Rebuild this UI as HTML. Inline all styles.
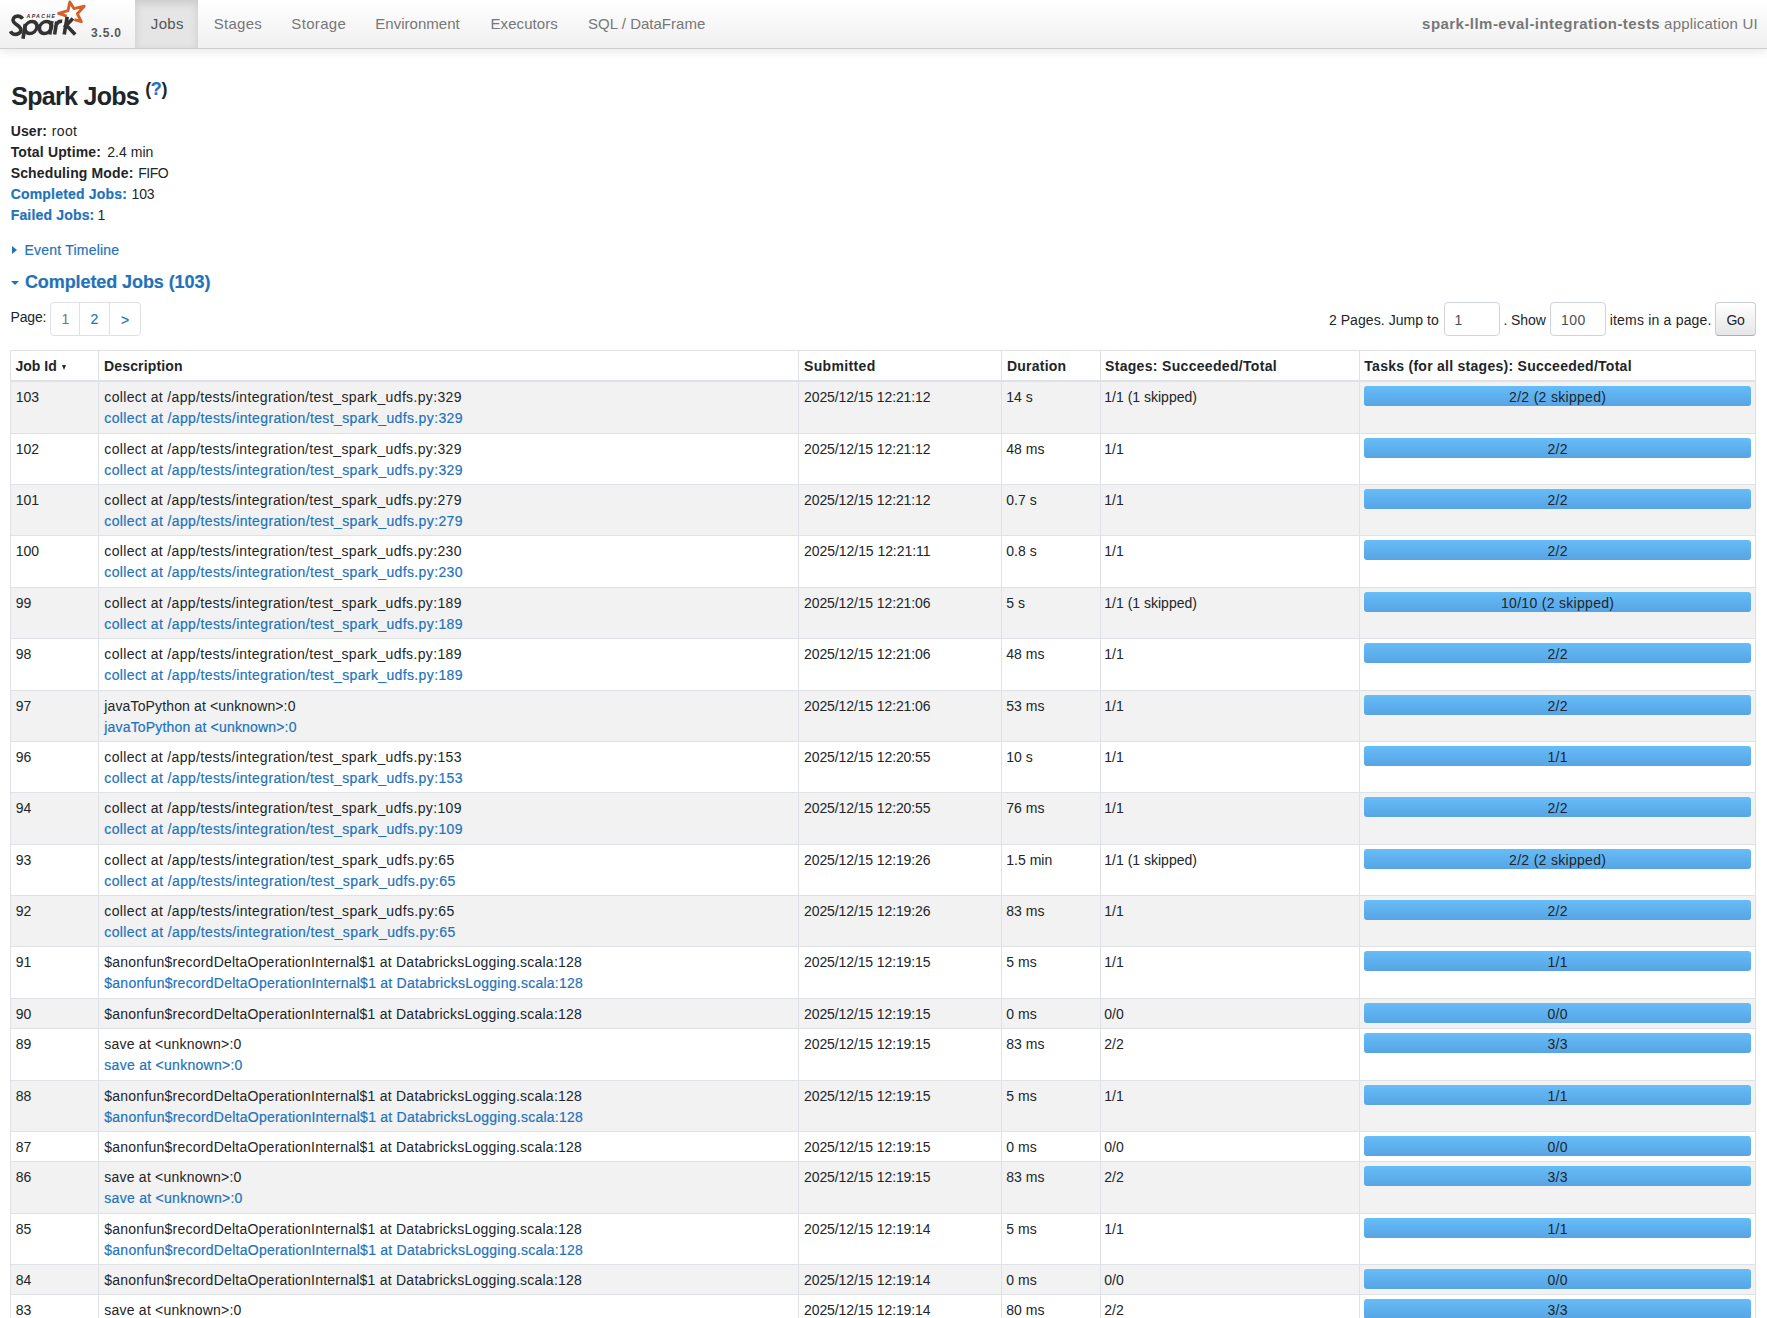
<!DOCTYPE html><html><head><meta charset="utf-8"><style>
html,body{margin:0;padding:0;background:#fff;width:1767px;height:1318px;overflow:hidden;position:relative}
body{font-family:"Liberation Sans",sans-serif}
.t{position:absolute;white-space:nowrap}
.nav{position:absolute;left:0;top:0;width:1767px;height:48px;background:linear-gradient(to bottom,#ffffff,#f0f0f0);border-bottom:1px solid #cecece;box-shadow:0 2px 10px rgba(0,0,0,.1)}
.act{position:absolute;left:135px;top:0;width:63px;height:48px;background:#e5e5e5;box-shadow:inset 0 3px 8px rgba(0,0,0,.125)}
.row{position:absolute;left:10px;width:1745px;border-left:1px solid #dee2e6;border-right:1px solid #dee2e6;border-bottom:1px solid #dee2e6;box-sizing:content-box}
.vl{position:absolute;width:1px;background:#dee2e6}
.bar{position:absolute;left:1364px;width:387px;height:20px;border-radius:3px;background:linear-gradient(to bottom,#66bdf7,#57a4e4)}
.pg{position:absolute;border:1px solid #dee2e6;background:#fff}
.inp{position:absolute;border:1px solid #ced4da;border-radius:4px;background:#fff;box-sizing:border-box}
</style></head><body>
<div class="nav"></div><div class="act"></div>
<svg style="position:absolute;left:0;top:0" width="130" height="48" viewBox="0 0 130 48">
<path fill="none" stroke="#d5602b" stroke-width="2.9" stroke-linejoin="round" stroke-linecap="butt" d="M66.6,16.2 L58.6,13.4 L68,10.6 L69.8,2 L73.9,8.6 L84.2,6.2 L77.4,13.8 L81.3,21.6 L74.4,19.6"/>
<g fill="none" stroke="#333" stroke-width="3.6" stroke-linecap="butt">
<path d="M22.6,18.8 C21.2,16.6 19.5,16 17.6,16.1 C13.8,16.3 12.2,19.2 13.6,21.8 C15,24.4 20.6,26 20.9,29.6 C21.2,33.2 17.2,34.6 14.4,34.3 C12.6,34.1 11.4,33 10.5,31.2"/>
<ellipse cx="31" cy="27.5" rx="6" ry="6" transform="skewX(-10) translate(4.8,0)"/>
<path d="M25.3,24 L23,38.8"/>
<ellipse cx="45.5" cy="27.5" rx="6" ry="6" transform="skewX(-10) translate(4.8,0)"/>
<path d="M51.9,21 L49.8,34.5"/>
<path d="M54.6,34.5 L56.7,21.5 M56.1,25 C57.3,22 59.8,21 62.2,21.3"/>
</g>

<g fill="none" stroke="#333" stroke-width="3.6" stroke-linecap="butt">
<path d="M67.2,16.8 L64.2,34.5 M64.2,27.6 L72.9,18.6 M66.6,25.6 L75.2,34.5"/>
</g>
<g fill="#333" font-family="Liberation Sans" font-weight="700" font-style="italic" font-size="5.2" letter-spacing="1.4"><text x="26.5" y="18.2">APACHE</text></g>
</svg>
<div class="t" id="t5a6a5e3c21" style="left:91px;top:24px;font-size:12px;line-height:18px;color:#585858;font-weight:700;letter-spacing:0.825px;">3.5.0</div>
<div class="t" id="tfd8004ba39" style="left:150.8px;top:13px;font-size:15px;line-height:22px;color:#555;letter-spacing:0.333px;">Jobs</div>
<div class="t" id="tf6de943f74" style="left:213.7px;top:13px;font-size:15px;line-height:22px;color:#777;letter-spacing:0.280px;">Stages</div>
<div class="t" id="tdbd1c17d63" style="left:291.3px;top:13px;font-size:15px;line-height:22px;color:#777;letter-spacing:0.333px;">Storage</div>
<div class="t" id="t078db31aac" style="left:375.3px;top:13px;font-size:15px;line-height:22px;color:#777;letter-spacing:0.020px;">Environment</div>
<div class="t" id="t190e977862" style="left:490.5px;top:13px;font-size:15px;line-height:22px;color:#777;letter-spacing:0.077px;">Executors</div>
<div class="t" id="tdd72fa5147" style="left:588.1px;top:13px;font-size:15px;line-height:22px;color:#777;letter-spacing:0.013px;">SQL / DataFrame</div>
<div class="t" id="tf8b7c0cc2b" style="left:1422.1px;top:13px;font-size:15px;line-height:22px;color:#777;font-weight:700;letter-spacing:0.459px;">spark-llm-eval-integration-tests</div>
<div class="t" id="t8193181b1c" style="left:1664.1px;top:13px;font-size:15px;line-height:22px;color:#777;letter-spacing:0.201px;">application UI</div>
<div class="t" id="t62a575fa32" style="left:11.2px;top:77px;font-size:25px;line-height:38px;color:#212529;font-weight:700;letter-spacing:-0.688px;">Spark Jobs</div>
<div class="t" id="t9cfd873ae0" style="left:145.2px;top:76px;font-size:18px;line-height:27px;color:#212529;font-weight:700;">(</div>
<div class="t" id="t18f5e1b5c4" style="left:150.8px;top:76px;font-size:18px;line-height:27px;color:#1f73bb;font-weight:700;-webkit-text-stroke:0.2px #1f73bb;">?</div>
<div class="t" id="t8e1df1a04c" style="left:161.5px;top:76px;font-size:18px;line-height:27px;color:#212529;font-weight:700;">)</div>
<div class="t" id="tacb48e94f9" style="left:10.7px;top:121px;font-size:14px;line-height:21px;color:#212529;font-weight:700;letter-spacing:0.125px;">User:</div><div class="t" id="tb560ddbbad" style="left:51.8px;top:121px;font-size:14px;line-height:21px;color:#212529;letter-spacing:0.333px;">root</div>
<div class="t" id="tde3e8092ce" style="left:10.7px;top:142px;font-size:14px;line-height:21px;color:#212529;font-weight:700;letter-spacing:0.151px;">Total Uptime:</div><div class="t" id="t4e84576a62" style="left:107.3px;top:142px;font-size:14px;line-height:21px;color:#212529;letter-spacing:0.014px;">2.4 min</div>
<div class="t" id="t5f37700813" style="left:10.7px;top:163px;font-size:14px;line-height:21px;color:#212529;font-weight:700;letter-spacing:0.137px;">Scheduling Mode:</div><div class="t" id="t1725ba6a26" style="left:138.2px;top:163px;font-size:14px;line-height:21px;color:#212529;letter-spacing:-1.000px;letter-spacing:-0.45px;">FIFO</div>
<div class="t" id="tb13db2fc51" style="left:10.7px;top:184px;font-size:14px;line-height:21px;color:#1f73bb;font-weight:700;-webkit-text-stroke:0.2px #1f73bb;letter-spacing:0.191px;">Completed Jobs:</div><div class="t" id="t88b6d6ae61" style="left:131.6px;top:184px;font-size:14px;line-height:21px;color:#212529;letter-spacing:-0.200px;">103</div>
<div class="t" id="t373b7ed87a" style="left:10.7px;top:205px;font-size:14px;line-height:21px;color:#1f73bb;font-weight:700;-webkit-text-stroke:0.2px #1f73bb;letter-spacing:0.172px;">Failed Jobs:</div><div class="t" id="t9db89bc16e" style="left:97.6px;top:205px;font-size:14px;line-height:21px;color:#212529;">1</div>
<div style="position:absolute;left:12px;top:245.5px;width:0;height:0;border-top:4.6px solid transparent;border-bottom:4.6px solid transparent;border-left:5px solid #1f73bb"></div>
<div class="t" id="t18c885a297" style="left:24.5px;top:240px;font-size:14px;line-height:21px;color:#1f73bb;-webkit-text-stroke:0.2px #1f73bb;letter-spacing:0.212px;">Event Timeline</div>
<div style="position:absolute;left:10.6px;top:280.8px;width:0;height:0;border-left:4.6px solid transparent;border-right:4.6px solid transparent;border-top:4.8px solid #1f73bb"></div>
<div class="t" id="t7a2237b650" style="left:24.9px;top:269px;font-size:18px;line-height:27px;color:#1f73bb;font-weight:700;-webkit-text-stroke:0.2px #1f73bb;letter-spacing:-0.082px;">Completed Jobs (103)</div>
<div class="t" id="t27ff93599c" style="left:10.6px;top:307px;font-size:14px;line-height:21px;color:#212529;letter-spacing:-0.200px;">Page:</div>
<div style="position:absolute;left:50px;top:302px;width:89px;height:32px;border:1px solid #dee2e6;border-radius:4px;background:#fff"></div>
<div class="vl" style="left:79px;top:302px;height:34px"></div><div class="vl" style="left:109px;top:302px;height:34px"></div>
<div class="t" id="t10a826cb85" style="left:61.5px;top:309px;font-size:14px;line-height:21px;color:#6c757d;">1</div>
<div class="t" id="t5f5555421e" style="left:90.5px;top:309px;font-size:14px;line-height:21px;color:#1f73bb;-webkit-text-stroke:0.2px #1f73bb;">2</div>
<div class="t" id="tf7d93cad2c" style="left:121px;top:310px;font-size:14px;line-height:21px;color:#1f73bb;-webkit-text-stroke:0.2px #1f73bb;">&gt;</div>
<div class="t" id="t232e25d809" style="left:1328.9px;top:310px;font-size:14px;line-height:21px;color:#212529;letter-spacing:0.067px;">2 Pages. Jump to</div>
<div class="inp" style="left:1444px;top:302px;width:56px;height:34px"></div>
<div class="t" id="tcce70ca4fe" style="left:1454.5px;top:310px;font-size:14px;line-height:21px;color:#495057;">1</div>
<div class="t" id="t486238b641" style="left:1503.4px;top:310px;font-size:14px;line-height:21px;color:#212529;letter-spacing:-0.060px;">. Show</div>
<div class="inp" style="left:1550px;top:302px;width:56px;height:34px"></div>
<div class="t" id="tbb3d0f333e" style="left:1561px;top:310px;font-size:14px;line-height:21px;color:#495057;letter-spacing:0.500px;">100</div>
<div class="t" id="t1c709797a5" style="left:1609.7px;top:310px;font-size:14px;line-height:21px;color:#212529;letter-spacing:0.196px;">items in a page.</div>
<div style="position:absolute;left:1715px;top:302px;width:41px;height:34px;box-sizing:border-box;border:1px solid #c9cfd6;border-bottom-color:#a9adb2;border-radius:4px;background:linear-gradient(to bottom,#ffffff,#e6e6e6)"></div>
<div class="t" id="t8bb71c042a" style="left:1726.5px;top:310px;font-size:14px;line-height:21px;color:#212529;letter-spacing:-0.4px;">Go</div>
<div style="position:absolute;left:10px;top:350px;width:1746px;height:1px;background:#dee2e6"></div>
<div style="position:absolute;left:10px;top:380px;width:1746px;height:2px;background:#dee2e6"></div>
<div class="t" id="td62880f7bf" style="left:15.5px;top:356px;font-size:14px;line-height:21px;color:#212529;font-weight:700;">Job Id</div>
<div class="t" id="t5d5263bd03" style="left:104px;top:356px;font-size:14px;line-height:21px;color:#212529;font-weight:700;letter-spacing:0.150px;">Description</div>
<div class="t" id="t6ed36d97dd" style="left:804px;top:356px;font-size:14px;line-height:21px;color:#212529;font-weight:700;letter-spacing:0.350px;">Submitted</div>
<div class="t" id="t56b8b93bbd" style="left:1007px;top:356px;font-size:14px;line-height:21px;color:#212529;font-weight:700;letter-spacing:0.214px;">Duration</div>
<div class="t" id="t9f754346dc" style="left:1105px;top:356px;font-size:14px;line-height:21px;color:#212529;font-weight:700;letter-spacing:0.320px;">Stages: Succeeded/Total</div>
<div class="t" id="tce5a482f80" style="left:1364.3px;top:356px;font-size:14px;line-height:21px;color:#212529;font-weight:700;letter-spacing:0.269px;">Tasks (for all stages): Succeeded/Total</div>
<div style="position:absolute;left:62px;top:364.6px;width:0;height:0;border-left:2.8px solid transparent;border-right:2.8px solid transparent;border-top:5px solid #212529"></div>
<div style="position:absolute;left:10px;top:382px;width:1746px;height:51px;background:#f2f2f2"></div>
<div style="position:absolute;left:10px;top:433px;width:1746px;height:1px;background:#dee2e6"></div>
<div class="t" id="t7436fdbd22" style="left:15.8px;top:387px;font-size:14px;line-height:21px;color:#212529;">103</div>
<div class="t" id="taf8f8dfed6" style="left:104.3px;top:387px;font-size:14px;line-height:21px;color:#212529;letter-spacing:0.354px;">collect at /app/tests/integration/test_spark_udfs.py:329</div>
<div class="t" id="t60bb6db279" style="left:104.3px;top:408px;font-size:14px;line-height:21px;color:#1f73bb;-webkit-text-stroke:0.2px #1f73bb;letter-spacing:0.372px;">collect at /app/tests/integration/test_spark_udfs.py:329</div>
<div class="t" id="t8cca39bdf2" style="left:804.1px;top:387px;font-size:14px;line-height:21px;color:#212529;letter-spacing:-0.114px;">2025/12/15 12:21:12</div>
<div class="t" id="t75221ed0a7" style="left:1006.3px;top:387px;font-size:14px;line-height:21px;color:#212529;">14 s</div>
<div class="t" id="t6d46c65faf" style="left:1104.3px;top:387px;font-size:14px;line-height:21px;color:#212529;">1/1 (1 skipped)</div>
<div class="bar" style="top:386px"></div>
<div class="t" id="ta11c407d30" style="left:1364px;top:387px;font-size:14px;line-height:21px;color:#212529;width:387px;text-align:center;letter-spacing:0.3px;text-indent:0.3px;">2/2 (2 skipped)</div>
<div style="position:absolute;left:10px;top:434px;width:1746px;height:50px;background:#ffffff"></div>
<div style="position:absolute;left:10px;top:484px;width:1746px;height:1px;background:#dee2e6"></div>
<div class="t" id="t82433eaf18" style="left:15.8px;top:439px;font-size:14px;line-height:21px;color:#212529;">102</div>
<div class="t" id="t2ff0c02efa" style="left:104.3px;top:439px;font-size:14px;line-height:21px;color:#212529;letter-spacing:0.354px;">collect at /app/tests/integration/test_spark_udfs.py:329</div>
<div class="t" id="tab244a0f2c" style="left:104.3px;top:460px;font-size:14px;line-height:21px;color:#1f73bb;-webkit-text-stroke:0.2px #1f73bb;letter-spacing:0.372px;">collect at /app/tests/integration/test_spark_udfs.py:329</div>
<div class="t" id="td72dc7c673" style="left:804.1px;top:439px;font-size:14px;line-height:21px;color:#212529;letter-spacing:-0.114px;">2025/12/15 12:21:12</div>
<div class="t" id="tbfafc1f957" style="left:1006.3px;top:439px;font-size:14px;line-height:21px;color:#212529;">48 ms</div>
<div class="t" id="tca086c2a58" style="left:1104.3px;top:439px;font-size:14px;line-height:21px;color:#212529;">1/1</div>
<div class="bar" style="top:438px"></div>
<div class="t" id="t0565558286" style="left:1364px;top:439px;font-size:14px;line-height:21px;color:#212529;width:387px;text-align:center;letter-spacing:0.3px;text-indent:0.3px;">2/2</div>
<div style="position:absolute;left:10px;top:485px;width:1746px;height:50px;background:#f2f2f2"></div>
<div style="position:absolute;left:10px;top:535px;width:1746px;height:1px;background:#dee2e6"></div>
<div class="t" id="tb1683d8fe5" style="left:15.8px;top:490px;font-size:14px;line-height:21px;color:#212529;">101</div>
<div class="t" id="te5a6e24013" style="left:104.3px;top:490px;font-size:14px;line-height:21px;color:#212529;letter-spacing:0.354px;">collect at /app/tests/integration/test_spark_udfs.py:279</div>
<div class="t" id="tabeae9259c" style="left:104.3px;top:511px;font-size:14px;line-height:21px;color:#1f73bb;-webkit-text-stroke:0.2px #1f73bb;letter-spacing:0.372px;">collect at /app/tests/integration/test_spark_udfs.py:279</div>
<div class="t" id="tf7f2473b9a" style="left:804.1px;top:490px;font-size:14px;line-height:21px;color:#212529;letter-spacing:-0.114px;">2025/12/15 12:21:12</div>
<div class="t" id="tbadb781308" style="left:1006.3px;top:490px;font-size:14px;line-height:21px;color:#212529;">0.7 s</div>
<div class="t" id="tc0b9d9264a" style="left:1104.3px;top:490px;font-size:14px;line-height:21px;color:#212529;">1/1</div>
<div class="bar" style="top:489px"></div>
<div class="t" id="t87e4671468" style="left:1364px;top:490px;font-size:14px;line-height:21px;color:#212529;width:387px;text-align:center;letter-spacing:0.3px;text-indent:0.3px;">2/2</div>
<div style="position:absolute;left:10px;top:536px;width:1746px;height:51px;background:#ffffff"></div>
<div style="position:absolute;left:10px;top:587px;width:1746px;height:1px;background:#dee2e6"></div>
<div class="t" id="t5a372eea39" style="left:15.8px;top:541px;font-size:14px;line-height:21px;color:#212529;">100</div>
<div class="t" id="t2957afc64e" style="left:104.3px;top:541px;font-size:14px;line-height:21px;color:#212529;letter-spacing:0.354px;">collect at /app/tests/integration/test_spark_udfs.py:230</div>
<div class="t" id="td7cb7f14f0" style="left:104.3px;top:562px;font-size:14px;line-height:21px;color:#1f73bb;-webkit-text-stroke:0.2px #1f73bb;letter-spacing:0.372px;">collect at /app/tests/integration/test_spark_udfs.py:230</div>
<div class="t" id="t29ed4abfa1" style="left:804.1px;top:541px;font-size:14px;line-height:21px;color:#212529;letter-spacing:-0.058px;">2025/12/15 12:21:11</div>
<div class="t" id="t8cd5def2f8" style="left:1006.3px;top:541px;font-size:14px;line-height:21px;color:#212529;">0.8 s</div>
<div class="t" id="t7472454267" style="left:1104.3px;top:541px;font-size:14px;line-height:21px;color:#212529;">1/1</div>
<div class="bar" style="top:540px"></div>
<div class="t" id="t37c2acee40" style="left:1364px;top:541px;font-size:14px;line-height:21px;color:#212529;width:387px;text-align:center;letter-spacing:0.3px;text-indent:0.3px;">2/2</div>
<div style="position:absolute;left:10px;top:588px;width:1746px;height:50px;background:#f2f2f2"></div>
<div style="position:absolute;left:10px;top:638px;width:1746px;height:1px;background:#dee2e6"></div>
<div class="t" id="tdf21d88c3e" style="left:15.8px;top:593px;font-size:14px;line-height:21px;color:#212529;">99</div>
<div class="t" id="tefd8e33620" style="left:104.3px;top:593px;font-size:14px;line-height:21px;color:#212529;letter-spacing:0.354px;">collect at /app/tests/integration/test_spark_udfs.py:189</div>
<div class="t" id="t9ec468438d" style="left:104.3px;top:614px;font-size:14px;line-height:21px;color:#1f73bb;-webkit-text-stroke:0.2px #1f73bb;letter-spacing:0.372px;">collect at /app/tests/integration/test_spark_udfs.py:189</div>
<div class="t" id="tc55a027c8a" style="left:804.1px;top:593px;font-size:14px;line-height:21px;color:#212529;letter-spacing:-0.114px;">2025/12/15 12:21:06</div>
<div class="t" id="t2f1f75395b" style="left:1006.3px;top:593px;font-size:14px;line-height:21px;color:#212529;">5 s</div>
<div class="t" id="t0a824380c3" style="left:1104.3px;top:593px;font-size:14px;line-height:21px;color:#212529;">1/1 (1 skipped)</div>
<div class="bar" style="top:592px"></div>
<div class="t" id="teb66f91c84" style="left:1364px;top:593px;font-size:14px;line-height:21px;color:#212529;width:387px;text-align:center;letter-spacing:0.3px;text-indent:0.3px;">10/10 (2 skipped)</div>
<div style="position:absolute;left:10px;top:639px;width:1746px;height:51px;background:#ffffff"></div>
<div style="position:absolute;left:10px;top:690px;width:1746px;height:1px;background:#dee2e6"></div>
<div class="t" id="t3019eb8095" style="left:15.8px;top:644px;font-size:14px;line-height:21px;color:#212529;">98</div>
<div class="t" id="t48c21447bd" style="left:104.3px;top:644px;font-size:14px;line-height:21px;color:#212529;letter-spacing:0.354px;">collect at /app/tests/integration/test_spark_udfs.py:189</div>
<div class="t" id="t20ddb12ada" style="left:104.3px;top:665px;font-size:14px;line-height:21px;color:#1f73bb;-webkit-text-stroke:0.2px #1f73bb;letter-spacing:0.372px;">collect at /app/tests/integration/test_spark_udfs.py:189</div>
<div class="t" id="te91d3c0370" style="left:804.1px;top:644px;font-size:14px;line-height:21px;color:#212529;letter-spacing:-0.114px;">2025/12/15 12:21:06</div>
<div class="t" id="t8c1d95ec3a" style="left:1006.3px;top:644px;font-size:14px;line-height:21px;color:#212529;">48 ms</div>
<div class="t" id="t4ee1949a8c" style="left:1104.3px;top:644px;font-size:14px;line-height:21px;color:#212529;">1/1</div>
<div class="bar" style="top:643px"></div>
<div class="t" id="td210687749" style="left:1364px;top:644px;font-size:14px;line-height:21px;color:#212529;width:387px;text-align:center;letter-spacing:0.3px;text-indent:0.3px;">2/2</div>
<div style="position:absolute;left:10px;top:691px;width:1746px;height:50px;background:#f2f2f2"></div>
<div style="position:absolute;left:10px;top:741px;width:1746px;height:1px;background:#dee2e6"></div>
<div class="t" id="tc7976aa92e" style="left:15.8px;top:696px;font-size:14px;line-height:21px;color:#212529;">97</div>
<div class="t" id="t3bf3961030" style="left:104.3px;top:696px;font-size:14px;line-height:21px;color:#212529;letter-spacing:0.137px;">javaToPython at &lt;unknown&gt;:0</div>
<div class="t" id="t575fc0992e" style="left:104.3px;top:717px;font-size:14px;line-height:21px;color:#1f73bb;-webkit-text-stroke:0.2px #1f73bb;letter-spacing:0.175px;">javaToPython at &lt;unknown&gt;:0</div>
<div class="t" id="te9c7b3fa1f" style="left:804.1px;top:696px;font-size:14px;line-height:21px;color:#212529;letter-spacing:-0.114px;">2025/12/15 12:21:06</div>
<div class="t" id="td5e16c6f1c" style="left:1006.3px;top:696px;font-size:14px;line-height:21px;color:#212529;">53 ms</div>
<div class="t" id="t6fc532798c" style="left:1104.3px;top:696px;font-size:14px;line-height:21px;color:#212529;">1/1</div>
<div class="bar" style="top:695px"></div>
<div class="t" id="t0d1cf9e5cf" style="left:1364px;top:696px;font-size:14px;line-height:21px;color:#212529;width:387px;text-align:center;letter-spacing:0.3px;text-indent:0.3px;">2/2</div>
<div style="position:absolute;left:10px;top:742px;width:1746px;height:50px;background:#ffffff"></div>
<div style="position:absolute;left:10px;top:792px;width:1746px;height:1px;background:#dee2e6"></div>
<div class="t" id="t5e1b613e7e" style="left:15.8px;top:747px;font-size:14px;line-height:21px;color:#212529;">96</div>
<div class="t" id="tc0801e165f" style="left:104.3px;top:747px;font-size:14px;line-height:21px;color:#212529;letter-spacing:0.354px;">collect at /app/tests/integration/test_spark_udfs.py:153</div>
<div class="t" id="tb08733fb9f" style="left:104.3px;top:768px;font-size:14px;line-height:21px;color:#1f73bb;-webkit-text-stroke:0.2px #1f73bb;letter-spacing:0.372px;">collect at /app/tests/integration/test_spark_udfs.py:153</div>
<div class="t" id="tc7055b93b0" style="left:804.1px;top:747px;font-size:14px;line-height:21px;color:#212529;letter-spacing:-0.114px;">2025/12/15 12:20:55</div>
<div class="t" id="tb0ac088fd5" style="left:1006.3px;top:747px;font-size:14px;line-height:21px;color:#212529;">10 s</div>
<div class="t" id="tb8c03fc2f5" style="left:1104.3px;top:747px;font-size:14px;line-height:21px;color:#212529;">1/1</div>
<div class="bar" style="top:746px"></div>
<div class="t" id="t773bc3b8f7" style="left:1364px;top:747px;font-size:14px;line-height:21px;color:#212529;width:387px;text-align:center;letter-spacing:0.3px;text-indent:0.3px;">1/1</div>
<div style="position:absolute;left:10px;top:793px;width:1746px;height:51px;background:#f2f2f2"></div>
<div style="position:absolute;left:10px;top:844px;width:1746px;height:1px;background:#dee2e6"></div>
<div class="t" id="tc6ca89c3d0" style="left:15.8px;top:798px;font-size:14px;line-height:21px;color:#212529;">94</div>
<div class="t" id="t922f0f4982" style="left:104.3px;top:798px;font-size:14px;line-height:21px;color:#212529;letter-spacing:0.354px;">collect at /app/tests/integration/test_spark_udfs.py:109</div>
<div class="t" id="t8ea2f7690e" style="left:104.3px;top:819px;font-size:14px;line-height:21px;color:#1f73bb;-webkit-text-stroke:0.2px #1f73bb;letter-spacing:0.372px;">collect at /app/tests/integration/test_spark_udfs.py:109</div>
<div class="t" id="t0ea3cadc6a" style="left:804.1px;top:798px;font-size:14px;line-height:21px;color:#212529;letter-spacing:-0.114px;">2025/12/15 12:20:55</div>
<div class="t" id="t783882354c" style="left:1006.3px;top:798px;font-size:14px;line-height:21px;color:#212529;">76 ms</div>
<div class="t" id="td283efd604" style="left:1104.3px;top:798px;font-size:14px;line-height:21px;color:#212529;">1/1</div>
<div class="bar" style="top:797px"></div>
<div class="t" id="tbe665a4d52" style="left:1364px;top:798px;font-size:14px;line-height:21px;color:#212529;width:387px;text-align:center;letter-spacing:0.3px;text-indent:0.3px;">2/2</div>
<div style="position:absolute;left:10px;top:845px;width:1746px;height:50px;background:#ffffff"></div>
<div style="position:absolute;left:10px;top:895px;width:1746px;height:1px;background:#dee2e6"></div>
<div class="t" id="t75a4879328" style="left:15.8px;top:850px;font-size:14px;line-height:21px;color:#212529;">93</div>
<div class="t" id="t1a643f5471" style="left:104.3px;top:850px;font-size:14px;line-height:21px;color:#212529;letter-spacing:0.370px;">collect at /app/tests/integration/test_spark_udfs.py:65</div>
<div class="t" id="tc6eeccc914" style="left:104.3px;top:871px;font-size:14px;line-height:21px;color:#1f73bb;-webkit-text-stroke:0.2px #1f73bb;letter-spacing:0.389px;">collect at /app/tests/integration/test_spark_udfs.py:65</div>
<div class="t" id="td5f04d777e" style="left:804.1px;top:850px;font-size:14px;line-height:21px;color:#212529;letter-spacing:-0.114px;">2025/12/15 12:19:26</div>
<div class="t" id="t8248acdf5d" style="left:1006.3px;top:850px;font-size:14px;line-height:21px;color:#212529;">1.5 min</div>
<div class="t" id="t6f993ef272" style="left:1104.3px;top:850px;font-size:14px;line-height:21px;color:#212529;">1/1 (1 skipped)</div>
<div class="bar" style="top:849px"></div>
<div class="t" id="tb436c0244e" style="left:1364px;top:850px;font-size:14px;line-height:21px;color:#212529;width:387px;text-align:center;letter-spacing:0.3px;text-indent:0.3px;">2/2 (2 skipped)</div>
<div style="position:absolute;left:10px;top:896px;width:1746px;height:50px;background:#f2f2f2"></div>
<div style="position:absolute;left:10px;top:946px;width:1746px;height:1px;background:#dee2e6"></div>
<div class="t" id="tc1cde184a1" style="left:15.8px;top:901px;font-size:14px;line-height:21px;color:#212529;">92</div>
<div class="t" id="t5e6d6dd636" style="left:104.3px;top:901px;font-size:14px;line-height:21px;color:#212529;letter-spacing:0.370px;">collect at /app/tests/integration/test_spark_udfs.py:65</div>
<div class="t" id="t989be82bc1" style="left:104.3px;top:922px;font-size:14px;line-height:21px;color:#1f73bb;-webkit-text-stroke:0.2px #1f73bb;letter-spacing:0.389px;">collect at /app/tests/integration/test_spark_udfs.py:65</div>
<div class="t" id="t9996436ef2" style="left:804.1px;top:901px;font-size:14px;line-height:21px;color:#212529;letter-spacing:-0.114px;">2025/12/15 12:19:26</div>
<div class="t" id="t4cf1e7f597" style="left:1006.3px;top:901px;font-size:14px;line-height:21px;color:#212529;">83 ms</div>
<div class="t" id="t221aa2365e" style="left:1104.3px;top:901px;font-size:14px;line-height:21px;color:#212529;">1/1</div>
<div class="bar" style="top:900px"></div>
<div class="t" id="te233db31f6" style="left:1364px;top:901px;font-size:14px;line-height:21px;color:#212529;width:387px;text-align:center;letter-spacing:0.3px;text-indent:0.3px;">2/2</div>
<div style="position:absolute;left:10px;top:947px;width:1746px;height:51px;background:#ffffff"></div>
<div style="position:absolute;left:10px;top:998px;width:1746px;height:1px;background:#dee2e6"></div>
<div class="t" id="t4c1f02c9f6" style="left:15.8px;top:952px;font-size:14px;line-height:21px;color:#212529;">91</div>
<div class="t" id="tf18d018351" style="left:104.3px;top:952px;font-size:14px;line-height:21px;color:#212529;letter-spacing:0.232px;">$anonfun$recordDeltaOperationInternal$1 at DatabricksLogging.scala:128</div>
<div class="t" id="t193d32314e" style="left:104.3px;top:973px;font-size:14px;line-height:21px;color:#1f73bb;-webkit-text-stroke:0.2px #1f73bb;letter-spacing:0.246px;">$anonfun$recordDeltaOperationInternal$1 at DatabricksLogging.scala:128</div>
<div class="t" id="tcd06c35f22" style="left:804.1px;top:952px;font-size:14px;line-height:21px;color:#212529;letter-spacing:-0.114px;">2025/12/15 12:19:15</div>
<div class="t" id="tf9357271e8" style="left:1006.3px;top:952px;font-size:14px;line-height:21px;color:#212529;">5 ms</div>
<div class="t" id="tcee4b8ae61" style="left:1104.3px;top:952px;font-size:14px;line-height:21px;color:#212529;">1/1</div>
<div class="bar" style="top:951px"></div>
<div class="t" id="t57163a5f83" style="left:1364px;top:952px;font-size:14px;line-height:21px;color:#212529;width:387px;text-align:center;letter-spacing:0.3px;text-indent:0.3px;">1/1</div>
<div style="position:absolute;left:10px;top:999px;width:1746px;height:29px;background:#f2f2f2"></div>
<div style="position:absolute;left:10px;top:1028px;width:1746px;height:1px;background:#dee2e6"></div>
<div class="t" id="t366786577e" style="left:15.8px;top:1004px;font-size:14px;line-height:21px;color:#212529;">90</div>
<div class="t" id="t1b654919c0" style="left:104.3px;top:1004px;font-size:14px;line-height:21px;color:#212529;letter-spacing:0.232px;">$anonfun$recordDeltaOperationInternal$1 at DatabricksLogging.scala:128</div>
<div class="t" id="tf4955b6aa1" style="left:804.1px;top:1004px;font-size:14px;line-height:21px;color:#212529;letter-spacing:-0.114px;">2025/12/15 12:19:15</div>
<div class="t" id="t6a60c7af37" style="left:1006.3px;top:1004px;font-size:14px;line-height:21px;color:#212529;">0 ms</div>
<div class="t" id="t9c8571f539" style="left:1104.3px;top:1004px;font-size:14px;line-height:21px;color:#212529;">0/0</div>
<div class="bar" style="top:1003px"></div>
<div class="t" id="t08913353b6" style="left:1364px;top:1004px;font-size:14px;line-height:21px;color:#212529;width:387px;text-align:center;letter-spacing:0.3px;text-indent:0.3px;">0/0</div>
<div style="position:absolute;left:10px;top:1029px;width:1746px;height:51px;background:#ffffff"></div>
<div style="position:absolute;left:10px;top:1080px;width:1746px;height:1px;background:#dee2e6"></div>
<div class="t" id="te119625702" style="left:15.8px;top:1034px;font-size:14px;line-height:21px;color:#212529;">89</div>
<div class="t" id="t81c73f798c" style="left:104.3px;top:1034px;font-size:14px;line-height:21px;color:#212529;letter-spacing:0.222px;">save at &lt;unknown&gt;:0</div>
<div class="t" id="t973c44f09d" style="left:104.3px;top:1055px;font-size:14px;line-height:21px;color:#1f73bb;-webkit-text-stroke:0.2px #1f73bb;letter-spacing:0.278px;">save at &lt;unknown&gt;:0</div>
<div class="t" id="t91557d1d55" style="left:804.1px;top:1034px;font-size:14px;line-height:21px;color:#212529;letter-spacing:-0.114px;">2025/12/15 12:19:15</div>
<div class="t" id="tac5386f860" style="left:1006.3px;top:1034px;font-size:14px;line-height:21px;color:#212529;">83 ms</div>
<div class="t" id="tef0e303b8e" style="left:1104.3px;top:1034px;font-size:14px;line-height:21px;color:#212529;">2/2</div>
<div class="bar" style="top:1033px"></div>
<div class="t" id="tf1e0c53389" style="left:1364px;top:1034px;font-size:14px;line-height:21px;color:#212529;width:387px;text-align:center;letter-spacing:0.3px;text-indent:0.3px;">3/3</div>
<div style="position:absolute;left:10px;top:1081px;width:1746px;height:50px;background:#f2f2f2"></div>
<div style="position:absolute;left:10px;top:1131px;width:1746px;height:1px;background:#dee2e6"></div>
<div class="t" id="te9399df8bb" style="left:15.8px;top:1086px;font-size:14px;line-height:21px;color:#212529;">88</div>
<div class="t" id="t046fe966df" style="left:104.3px;top:1086px;font-size:14px;line-height:21px;color:#212529;letter-spacing:0.232px;">$anonfun$recordDeltaOperationInternal$1 at DatabricksLogging.scala:128</div>
<div class="t" id="t6cfe9dcc73" style="left:104.3px;top:1107px;font-size:14px;line-height:21px;color:#1f73bb;-webkit-text-stroke:0.2px #1f73bb;letter-spacing:0.246px;">$anonfun$recordDeltaOperationInternal$1 at DatabricksLogging.scala:128</div>
<div class="t" id="taa72302a16" style="left:804.1px;top:1086px;font-size:14px;line-height:21px;color:#212529;letter-spacing:-0.114px;">2025/12/15 12:19:15</div>
<div class="t" id="tb7c6387ba6" style="left:1006.3px;top:1086px;font-size:14px;line-height:21px;color:#212529;">5 ms</div>
<div class="t" id="t5cbb39fac4" style="left:1104.3px;top:1086px;font-size:14px;line-height:21px;color:#212529;">1/1</div>
<div class="bar" style="top:1085px"></div>
<div class="t" id="t7c26b841e7" style="left:1364px;top:1086px;font-size:14px;line-height:21px;color:#212529;width:387px;text-align:center;letter-spacing:0.3px;text-indent:0.3px;">1/1</div>
<div style="position:absolute;left:10px;top:1132px;width:1746px;height:29px;background:#ffffff"></div>
<div style="position:absolute;left:10px;top:1161px;width:1746px;height:1px;background:#dee2e6"></div>
<div class="t" id="t004472cb56" style="left:15.8px;top:1137px;font-size:14px;line-height:21px;color:#212529;">87</div>
<div class="t" id="tff0a7abf70" style="left:104.3px;top:1137px;font-size:14px;line-height:21px;color:#212529;letter-spacing:0.232px;">$anonfun$recordDeltaOperationInternal$1 at DatabricksLogging.scala:128</div>
<div class="t" id="t8adbc231e0" style="left:804.1px;top:1137px;font-size:14px;line-height:21px;color:#212529;letter-spacing:-0.114px;">2025/12/15 12:19:15</div>
<div class="t" id="t54a7ac90e5" style="left:1006.3px;top:1137px;font-size:14px;line-height:21px;color:#212529;">0 ms</div>
<div class="t" id="tfb173a9bf2" style="left:1104.3px;top:1137px;font-size:14px;line-height:21px;color:#212529;">0/0</div>
<div class="bar" style="top:1136px"></div>
<div class="t" id="t03201bc0b7" style="left:1364px;top:1137px;font-size:14px;line-height:21px;color:#212529;width:387px;text-align:center;letter-spacing:0.3px;text-indent:0.3px;">0/0</div>
<div style="position:absolute;left:10px;top:1162px;width:1746px;height:51px;background:#f2f2f2"></div>
<div style="position:absolute;left:10px;top:1213px;width:1746px;height:1px;background:#dee2e6"></div>
<div class="t" id="te8de79d8cc" style="left:15.8px;top:1167px;font-size:14px;line-height:21px;color:#212529;">86</div>
<div class="t" id="tb598328e07" style="left:104.3px;top:1167px;font-size:14px;line-height:21px;color:#212529;letter-spacing:0.222px;">save at &lt;unknown&gt;:0</div>
<div class="t" id="tcac6b16a0d" style="left:104.3px;top:1188px;font-size:14px;line-height:21px;color:#1f73bb;-webkit-text-stroke:0.2px #1f73bb;letter-spacing:0.278px;">save at &lt;unknown&gt;:0</div>
<div class="t" id="te45f2a5acd" style="left:804.1px;top:1167px;font-size:14px;line-height:21px;color:#212529;letter-spacing:-0.114px;">2025/12/15 12:19:15</div>
<div class="t" id="tf612c40800" style="left:1006.3px;top:1167px;font-size:14px;line-height:21px;color:#212529;">83 ms</div>
<div class="t" id="tc3e44f67ea" style="left:1104.3px;top:1167px;font-size:14px;line-height:21px;color:#212529;">2/2</div>
<div class="bar" style="top:1166px"></div>
<div class="t" id="tf7375a38a0" style="left:1364px;top:1167px;font-size:14px;line-height:21px;color:#212529;width:387px;text-align:center;letter-spacing:0.3px;text-indent:0.3px;">3/3</div>
<div style="position:absolute;left:10px;top:1214px;width:1746px;height:50px;background:#ffffff"></div>
<div style="position:absolute;left:10px;top:1264px;width:1746px;height:1px;background:#dee2e6"></div>
<div class="t" id="taeecff2fe7" style="left:15.8px;top:1219px;font-size:14px;line-height:21px;color:#212529;">85</div>
<div class="t" id="tc1f3c801d7" style="left:104.3px;top:1219px;font-size:14px;line-height:21px;color:#212529;letter-spacing:0.232px;">$anonfun$recordDeltaOperationInternal$1 at DatabricksLogging.scala:128</div>
<div class="t" id="t9c824d401d" style="left:104.3px;top:1240px;font-size:14px;line-height:21px;color:#1f73bb;-webkit-text-stroke:0.2px #1f73bb;letter-spacing:0.246px;">$anonfun$recordDeltaOperationInternal$1 at DatabricksLogging.scala:128</div>
<div class="t" id="t9a303d6e45" style="left:804.1px;top:1219px;font-size:14px;line-height:21px;color:#212529;letter-spacing:-0.113px;">2025/12/15 12:19:14</div>
<div class="t" id="tcf997ccde6" style="left:1006.3px;top:1219px;font-size:14px;line-height:21px;color:#212529;">5 ms</div>
<div class="t" id="ta645b9d733" style="left:1104.3px;top:1219px;font-size:14px;line-height:21px;color:#212529;">1/1</div>
<div class="bar" style="top:1218px"></div>
<div class="t" id="t6713497419" style="left:1364px;top:1219px;font-size:14px;line-height:21px;color:#212529;width:387px;text-align:center;letter-spacing:0.3px;text-indent:0.3px;">1/1</div>
<div style="position:absolute;left:10px;top:1265px;width:1746px;height:29px;background:#f2f2f2"></div>
<div style="position:absolute;left:10px;top:1294px;width:1746px;height:1px;background:#dee2e6"></div>
<div class="t" id="tc879d1c86a" style="left:15.8px;top:1270px;font-size:14px;line-height:21px;color:#212529;">84</div>
<div class="t" id="t5c8d2c7428" style="left:104.3px;top:1270px;font-size:14px;line-height:21px;color:#212529;letter-spacing:0.232px;">$anonfun$recordDeltaOperationInternal$1 at DatabricksLogging.scala:128</div>
<div class="t" id="ta8b162e9a3" style="left:804.1px;top:1270px;font-size:14px;line-height:21px;color:#212529;letter-spacing:-0.113px;">2025/12/15 12:19:14</div>
<div class="t" id="t1c666123a3" style="left:1006.3px;top:1270px;font-size:14px;line-height:21px;color:#212529;">0 ms</div>
<div class="t" id="ta6539966c6" style="left:1104.3px;top:1270px;font-size:14px;line-height:21px;color:#212529;">0/0</div>
<div class="bar" style="top:1269px"></div>
<div class="t" id="tce1ce3e449" style="left:1364px;top:1270px;font-size:14px;line-height:21px;color:#212529;width:387px;text-align:center;letter-spacing:0.3px;text-indent:0.3px;">0/0</div>
<div style="position:absolute;left:10px;top:1295px;width:1746px;height:50px;background:#ffffff"></div>
<div style="position:absolute;left:10px;top:1345px;width:1746px;height:1px;background:#dee2e6"></div>
<div class="t" id="t4900360f1f" style="left:15.8px;top:1300px;font-size:14px;line-height:21px;color:#212529;">83</div>
<div class="t" id="t8d567ba850" style="left:104.3px;top:1300px;font-size:14px;line-height:21px;color:#212529;letter-spacing:0.222px;">save at &lt;unknown&gt;:0</div>
<div class="t" id="td49a13cbe1" style="left:104.3px;top:1321px;font-size:14px;line-height:21px;color:#1f73bb;-webkit-text-stroke:0.2px #1f73bb;">save at &lt;unknown&gt;:0</div>
<div class="t" id="t391769e0db" style="left:804.1px;top:1300px;font-size:14px;line-height:21px;color:#212529;letter-spacing:-0.113px;">2025/12/15 12:19:14</div>
<div class="t" id="ta17c4ff1fa" style="left:1006.3px;top:1300px;font-size:14px;line-height:21px;color:#212529;">80 ms</div>
<div class="t" id="tfe1c0e194a" style="left:1104.3px;top:1300px;font-size:14px;line-height:21px;color:#212529;">2/2</div>
<div class="bar" style="top:1299px"></div>
<div class="t" id="tb218b18ca5" style="left:1364px;top:1300px;font-size:14px;line-height:21px;color:#212529;width:387px;text-align:center;letter-spacing:0.3px;text-indent:0.3px;">3/3</div>
<div class="vl" style="left:10px;top:350px;height:1000px"></div>
<div class="vl" style="left:98px;top:350px;height:1000px"></div>
<div class="vl" style="left:798px;top:350px;height:1000px"></div>
<div class="vl" style="left:1001px;top:350px;height:1000px"></div>
<div class="vl" style="left:1100px;top:350px;height:1000px"></div>
<div class="vl" style="left:1359px;top:350px;height:1000px"></div>
<div class="vl" style="left:1755px;top:350px;height:1000px"></div>
</body></html>
